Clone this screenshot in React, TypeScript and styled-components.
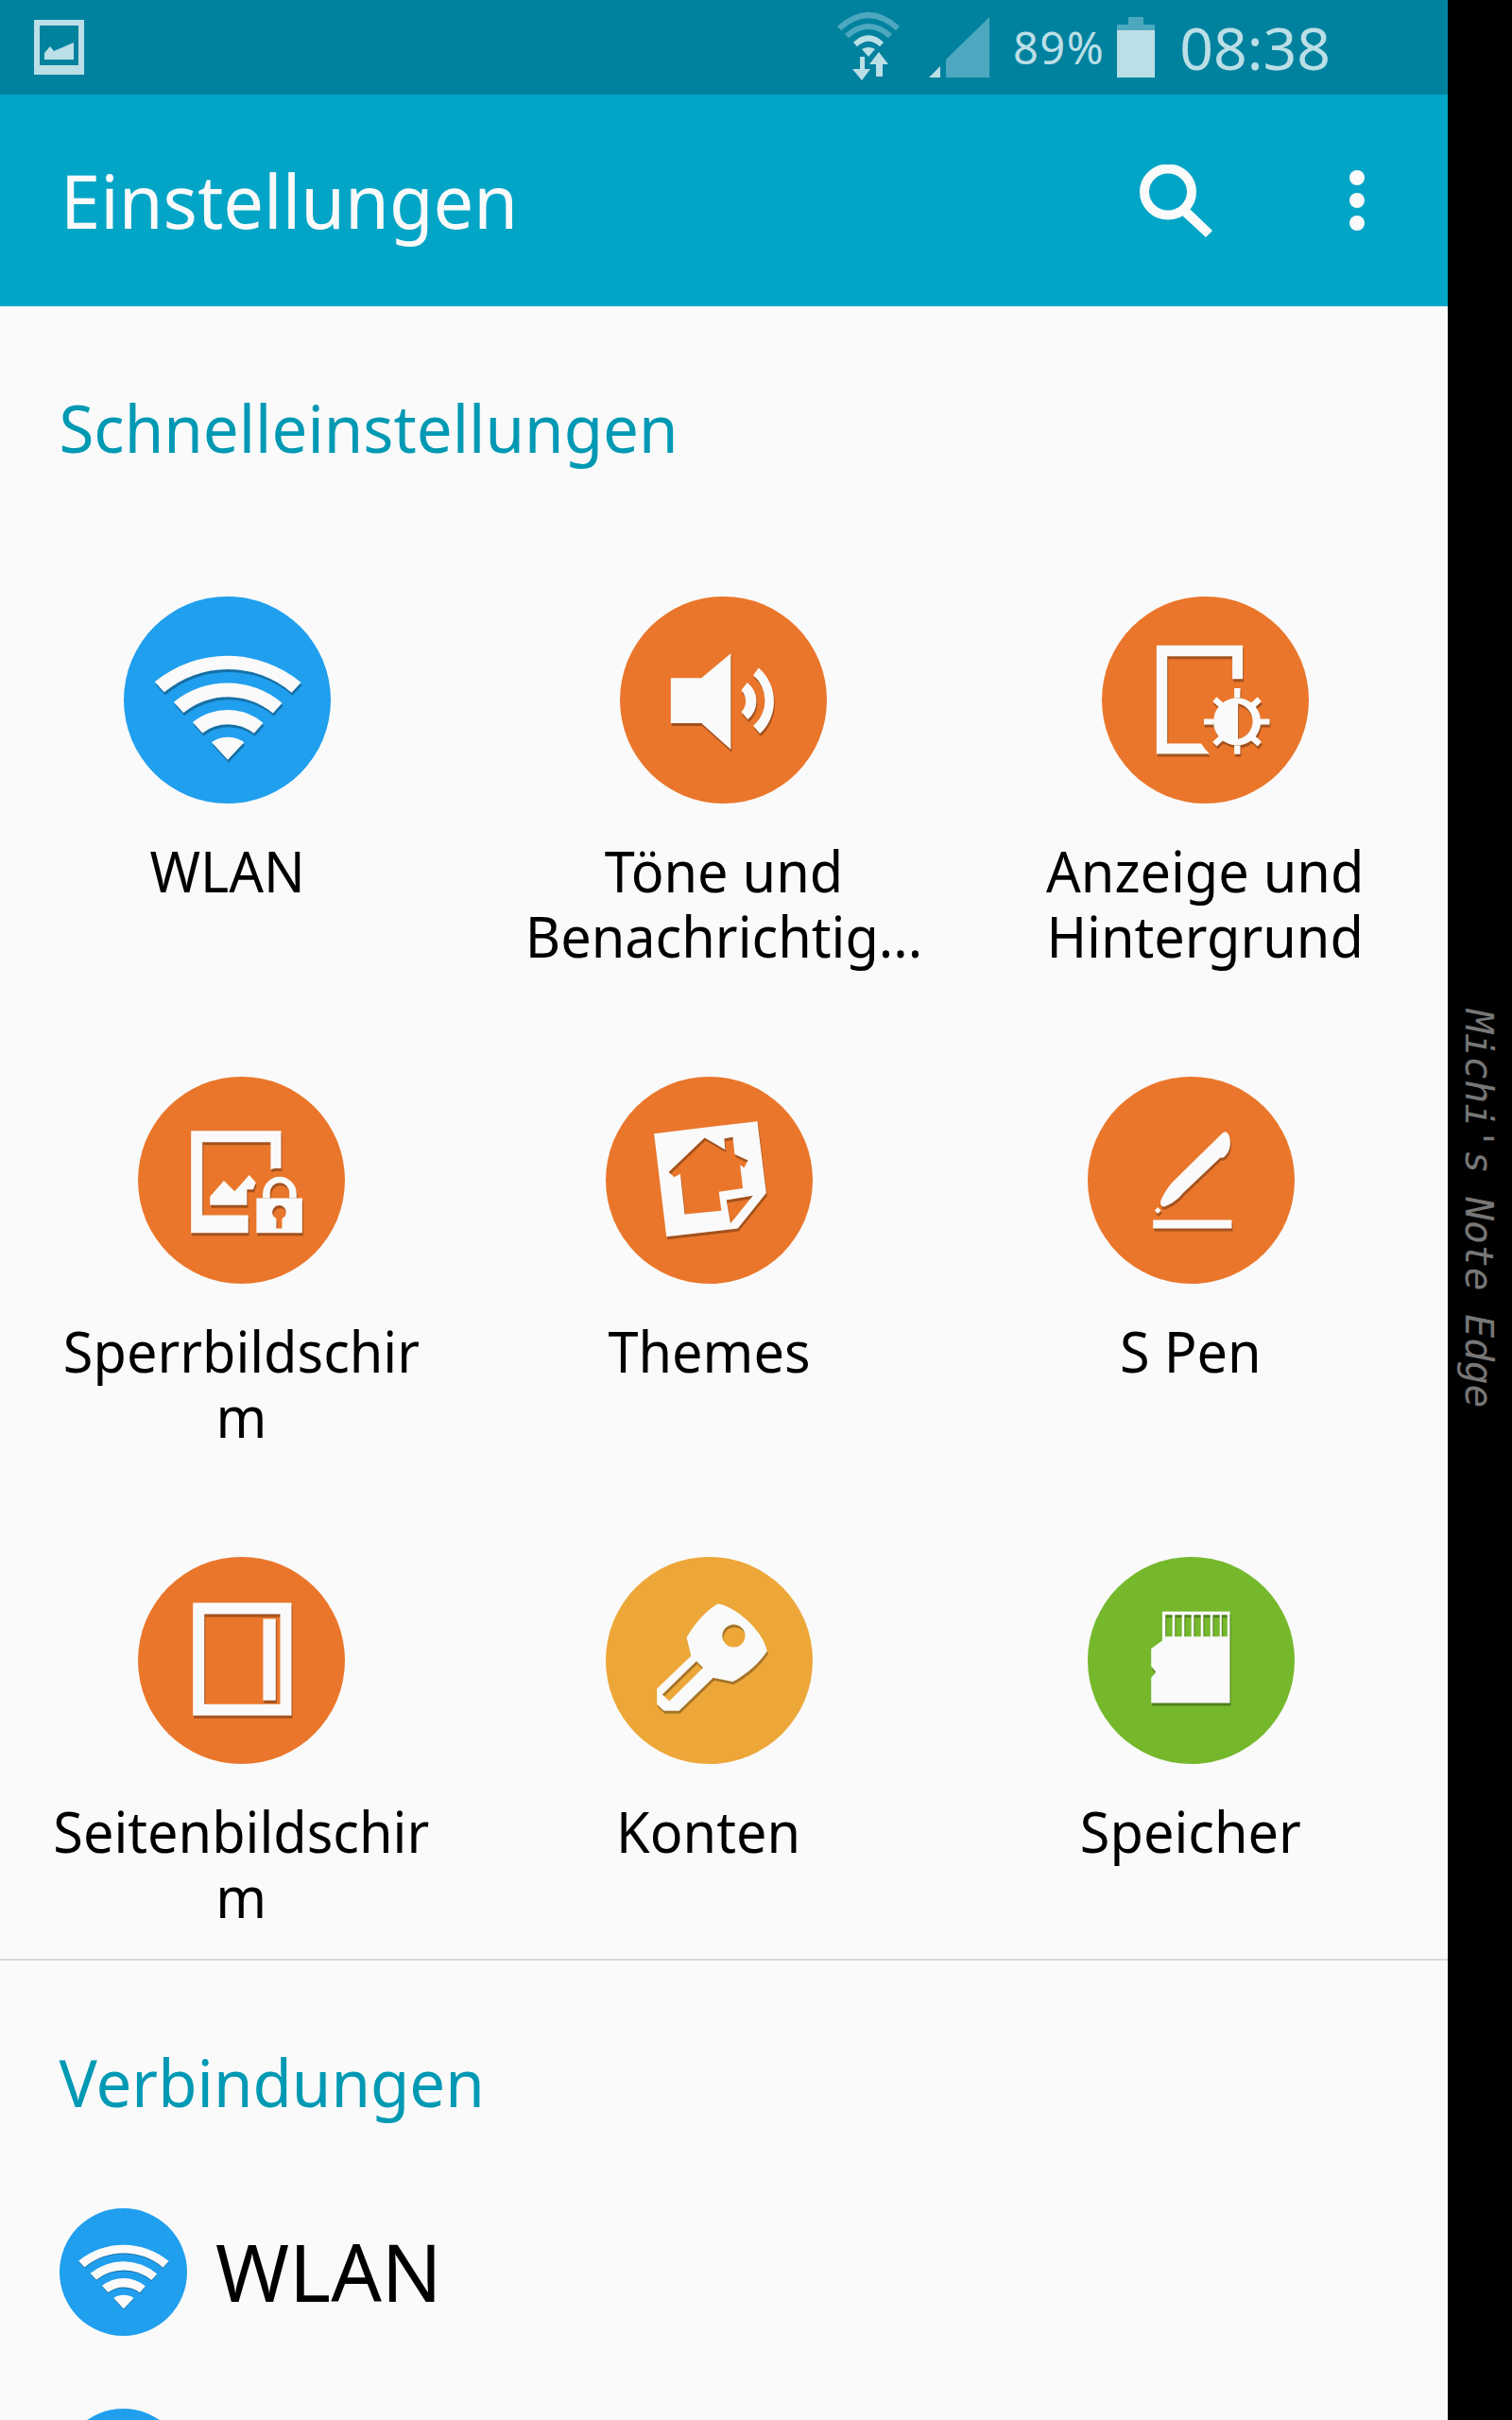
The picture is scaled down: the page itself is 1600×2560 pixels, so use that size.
import React from "react";
import styled, { createGlobalStyle } from "styled-components";

const GlobalStyle = createGlobalStyle`
  html, body {
    margin: 0;
    padding: 0;
    background: #000000;
  }
`;

const Screen = styled.div`
  display: flex;
  width: 1600px;
  height: 2560px;
  overflow: hidden;
  font-family: "Noto Sans", "Open Sans", sans-serif;
`;

const Phone = styled.div`
  width: 1532px;
  height: 2560px;
  flex-shrink: 0;
  background-color: #fafafa;
`;

const EdgeStrip = styled.div`
  flex-grow: 1;
  background-color: #000000;
  padding-top: 1068px;
  padding-left: 8px;
`;

const EdgeText = styled.div`
  writing-mode: vertical-rl;
  font-family: "DejaVu Sans Mono", monospace;
  font-size: 41.5px;
  font-style: oblique;
  font-weight: 400;
  letter-spacing: -0.2px;
  line-height: 50px;
  white-space: nowrap;
  color: #777777;
`;

const StatusBar = styled.div`
  display: flex;
  align-items: center;
  justify-content: space-between;
  height: 100px;
  padding: 0 124px 0 36px;
  background-color: #00829f;
  color: #bbdfe6;
`;

const StatusRight = styled.div`
  display: flex;
  align-items: center;
`;

const WifiGlyph = styled.svg`
  margin-right: 28px;
`;

const Percent = styled.span`
  font-size: 47px;
  letter-spacing: 1.5px;
  line-height: 100px;
  margin: 0 13px 0 25px;
`;

const Clock = styled.span`
  font-size: 62.5px;
  line-height: 100px;
  margin-left: 26px;
`;

const Header = styled.div`
  display: flex;
  align-items: center;
  justify-content: space-between;
  height: 224px;
  padding: 0 88px 0 64px;
  background-color: #02a5c6;
`;

const Title = styled.h1`
  margin: 0;
  font-size: 79px;
  font-weight: 400;
  line-height: 100px;
  color: #fafafa;
  transform: scaleX(0.96);
  transform-origin: left center;
`;

const HeaderActions = styled.div`
  display: flex;
  align-items: center;
  gap: 145px;
`;

const SectionTitle = styled.h2`
  margin: 0;
  padding: 0 0 0 64px;
  font-size: 69px;
  font-weight: 400;
  line-height: 90px;
  color: #0099b3;
  transform: scaleX(0.975);
  transform-origin: left center;
`;

const QuickSection = styled.section`
  height: 1750px;
  padding-top: 83px;
  box-sizing: border-box;
  border-bottom: 2px solid #dcdcdc;
`;

const QuickGrid = styled.div`
  display: grid;
  grid-auto-rows: 425px;
  row-gap: 83px;
  margin-top: 134px;
`;

const QuickRow = styled.div<{ $columns: string }>`
  display: grid;
  grid-template-columns: ${(props) => props.$columns};
`;

const QuickItem = styled.div`
  display: flex;
  flex-direction: column;
  align-items: center;
`;

const Badge = styled.div<{ $color: string; $size: number }>`
  width: ${(props) => props.$size}px;
  height: ${(props) => props.$size}px;
  flex-shrink: 0;
  border-radius: 50%;
  background-color: ${(props) => props.$color};
  svg {
    display: block;
    width: 100%;
    height: 100%;
    filter: drop-shadow(${(props) => (props.$size > 150 ? "1px 3px" : "0.6px 1.8px")} 0 rgba(0, 0, 0, 0.3));
  }
`;

const QuickLabel = styled.div`
  margin-top: 37px;
  font-size: 60px;
  line-height: 69px;
  color: #000000;
  text-align: center;
  white-space: pre-line;
  transform: scaleX(0.96);
`;

const ConnectSection = styled.section`
  padding-top: 83px;
`;

const ConnectList = styled.div`
  margin-top: 50px;
`;

const ConnectRow = styled.div`
  display: flex;
  align-items: center;
  gap: 30px;
  height: 212px;
  padding-left: 63px;
`;

const ConnectLabel = styled.span`
  font-size: 84px;
  line-height: 100px;
  color: #000000;
`;

const WifiIcon = () => (
  <svg viewBox="94 63 655 655">
    <g fill="#fafafa">
      <path d="M192 333A364 364 0 0 1 655 335L625 367A313 313 0 0 0 222 366Z" />
      <path d="M252 397A268 268 0 0 1 595 400L566 432A222 222 0 0 0 283 431Z" />
      <path d="M312 461A175 175 0 0 1 535 463L506 496A133 133 0 0 0 343 495Z" />
      <path d="M372 524A91 91 0 0 1 475 524L423 580Z" />
    </g>
  </svg>
);

const SoundIcon = () => (
  <svg viewBox="79 63 655 655">
    <g fill="#fafafa">
      <path d="M240 321H337L430 243V547L337 464H240Z" />
      <path d="M482 335A75 75 0 0 1 484 452L463 428A48 48 0 0 0 463 360Z" />
      <path d="M518 289A140 140 0 0 1 522 497L501 472A105 105 0 0 0 501 312Z" />
    </g>
  </svg>
);

const DisplayIcon = () => (
  <svg viewBox="79 63 655 655">
    <g fill="#fafafa">
      <path d="M252 218H525V324H492V252H286V528H393Q405 547 420 561H252Z" />
      <path
        fillRule="evenodd"
        d="M507 384A75 75 0 1 0 507 534A75 75 0 1 0 507 384ZM510 402A57 57 0 0 1 510 514Z"
      />
      <path d="M498 353H517V384H498ZM498 534H517V562H498ZM402 450H432V468H402ZM580 450H610V468H580Z" />
    </g>
    <g stroke="#fafafa" strokeWidth="19">
      <path d="M436 388L458 408M578 388L556 408M436 530L458 510M578 530L556 510" />
    </g>
  </svg>
);

const LockIcon = () => (
  <svg viewBox="48 57 655 655">
    <g fill="#fafafa">
      <path d="M216 228H501V347Q485 345 468 350V264H252V495H397V551H216Z" />
      <path d="M276 436L320 386L354 420L400 368L421 392L413 414H393V463H276Z" />
      <path d="M443 441V428A53 54 0 0 1 550 428V441H527V425A30 32 0 0 0 466 425V441Z" />
      <path
        fillRule="evenodd"
        d="M423 441H568V551H423ZM486 537H504V506A22 22 0 1 0 486 506Z"
      />
    </g>
  </svg>
);

const ThemeIcon = () => (
  <svg viewBox="63 57 655 655">
    <path
      fill="#fafafa"
      fillRule="evenodd"
      d="M216 237L543 198L571 425L481 537L255 563ZM376 250L262 359L280 375L299 364L313 492L429 481L421 421L497 410L488 336L501 345L513 322L471 302L465 248L438 253L441 288ZM445 447L458 521L529 433Z"
    />
  </svg>
);

const PenIcon = () => (
  <svg viewBox="63 57 655 655">
    <g fill="#fafafa">
      <path d="M497 231C510 232 516 255 514 272C512 290 505 300 500 305C495 312 488 316 484 312L365 425C350 445 325 462 305 468C295 470 290 455 296 445C305 425 318 405 330 392L490 235Z" />
      <path d="M275 480L285 470L295 480L285 491Z" />
      <path d="M270 510H519V537H270Z" />
    </g>
  </svg>
);

const PanelIcon = () => (
  <svg viewBox="48 50 655 655">
    <path
      fill="#fafafa"
      fillRule="evenodd"
      d="M222 195H534V552H222ZM258 231V516H498V231Z"
    />
    <path fill="#fafafa" d="M444 246H484V504H444Z" />
  </svg>
);

const KeyIcon = () => (
  <svg viewBox="33 50 655 655">
    <path
      fill="#fafafa"
      fillRule="evenodd"
      d="M388 198C440 205 530 280 544 348C520 385 480 420 435 445L373 432L265 537H217L195 516V467L303 363L289 305C315 260 350 220 388 198ZM438 264A36 36 0 1 0 438 336A36 36 0 1 0 438 264ZM320 380L212 485L234 506L341 401Z"
    />
  </svg>
);

const StorageIcon = () => (
  <svg viewBox="0 0 655 655">
    <path
      fill="#fafafa"
      fillRule="evenodd"
      d="M236 173H450V462H201V382L216 364L201 346V290L236 265ZM246 183V252H268V183ZM276 183V252H298V183ZM306 183V252H328V183ZM336 183V252H358V183ZM366 183V252H388V183ZM396 183V252H418V183ZM424 183V252H442V183Z"
    />
  </svg>
);

const ImageNotice = () => (
  <svg width="53" height="58" viewBox="0 0 53 58">
    <path
      fill="#bbdfe6"
      fillRule="evenodd"
      d="M0 0H53V58H0ZM6 6V48H47V6Z"
    />
    <path fill="#bbdfe6" d="M11 35L17 28L21 33L42 24V42H11Z" />
  </svg>
);

const WifiStatus = () => (
  <WifiGlyph width="72" height="80" viewBox="884 10 72 80">
    <g fill="none" strokeWidth="6">
      <path stroke="#4da8bf" d="M889 30Q920 2 951 30" />
      <path stroke="#4da8bf" d="M897 38Q920 18 943 38" />
      <path stroke="#bbdfe6" d="M906 47Q920 34 934 47" />
    </g>
    <path fill="#bbdfe6" d="M913 52Q920 48 927 52L920 60Z" />
    <path fill="#bbdfe6" d="M911 60H916V73H922L913 85L903 73H911Z" />
    <path fill="#bbdfe6" d="M931 55L941 68H935V81H928V68H921Z" />
  </WifiGlyph>
);

const SignalStatus = () => (
  <svg width="64" height="64" viewBox="984 18 64 64">
    <path fill="#4da8bf" d="M1002 63L1048 18V82H1002Z" />
    <path fill="#bbdfe6" d="M984 82L996 70V82Z" />
  </svg>
);

const BatteryStatus = () => (
  <svg width="40" height="64" viewBox="0 0 40 64">
    <path fill="#4da8bf" d="M12 0H28V8H40V14H0V8H12Z" />
    <path fill="#bbdfe6" d="M0 14H40V64H0Z" />
  </svg>
);

const SearchIcon = () => (
  <svg width="77" height="77" viewBox="1206 174 77 77">
    <ellipse cx="1236" cy="203" rx="25" ry="24.5" fill="none" stroke="#fafafa" strokeWidth="10" />
    <path fill="#fafafa" d="M1250 227L1258 220L1283 244L1276 251Z" />
  </svg>
);

const MoreIcon = () => (
  <svg width="16" height="64" viewBox="0 0 16 64">
    <g fill="#fafafa">
      <ellipse cx="8" cy="8" rx="8" ry="8" />
      <ellipse cx="8" cy="32" rx="8" ry="8" />
      <ellipse cx="8" cy="56" rx="8" ry="8" />
    </g>
  </svg>
);

const ORANGE = "#ea762b";

const quickRows = [
  {
    columns: "481px 569px 450px",
    items: [
      { label: "WLAN", color: "#209fee", icon: <WifiIcon /> },
      { label: "Töne und\nBenachrichtig...", color: ORANGE, icon: <SoundIcon /> },
      { label: "Anzeige und\nHintergrund", color: ORANGE, icon: <DisplayIcon /> },
    ],
  },
  {
    columns: "511px 478px 542px",
    items: [
      { label: "Sperrbildschir\nm", color: ORANGE, icon: <LockIcon /> },
      { label: "Themes", color: ORANGE, icon: <ThemeIcon /> },
      { label: "S Pen", color: ORANGE, icon: <PenIcon /> },
    ],
  },
  {
    columns: "511px 478px 542px",
    items: [
      { label: "Seitenbildschir\nm", color: ORANGE, icon: <PanelIcon /> },
      { label: "Konten", color: "#eda738", icon: <KeyIcon /> },
      { label: "Speicher", color: "#75b82c", icon: <StorageIcon /> },
    ],
  },
];

const App: React.FC = () => {
  return (
    <Screen>
      <GlobalStyle />
      <Phone>
        <StatusBar>
          <ImageNotice />
          <StatusRight>
            <WifiStatus />
            <SignalStatus />
            <Percent>89%</Percent>
            <BatteryStatus />
            <Clock>08:38</Clock>
          </StatusRight>
        </StatusBar>
        <Header>
          <Title>Einstellungen</Title>
          <HeaderActions>
            <SearchIcon />
            <MoreIcon />
          </HeaderActions>
        </Header>
        <QuickSection>
          <SectionTitle>Schnelleinstellungen</SectionTitle>
          <QuickGrid>
            {quickRows.map((row, rowIndex) => (
              <QuickRow key={rowIndex} $columns={row.columns}>
                {row.items.map((item) => (
                  <QuickItem key={item.label}>
                    <Badge $color={item.color} $size={219}>
                      {item.icon}
                    </Badge>
                    <QuickLabel>{item.label}</QuickLabel>
                  </QuickItem>
                ))}
              </QuickRow>
            ))}
          </QuickGrid>
        </QuickSection>
        <ConnectSection>
          <SectionTitle>Verbindungen</SectionTitle>
          <ConnectList>
            <ConnectRow>
              <Badge $color="#209fee" $size={135}>
                <WifiIcon />
              </Badge>
              <ConnectLabel>WLAN</ConnectLabel>
            </ConnectRow>
            <ConnectRow>
              <Badge $color="#209fee" $size={135} />
            </ConnectRow>
          </ConnectList>
        </ConnectSection>
      </Phone>
      <EdgeStrip>
        <EdgeText>Michi's Note Edge</EdgeText>
      </EdgeStrip>
    </Screen>
  );
};

export default App;
